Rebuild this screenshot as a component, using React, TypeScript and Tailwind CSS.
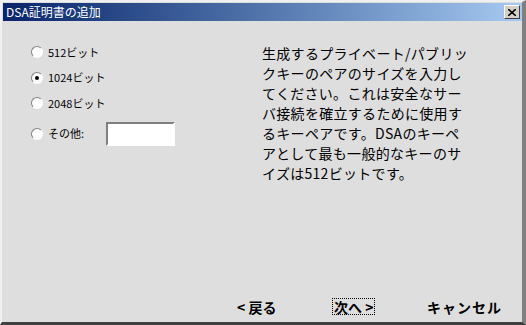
import React from 'react'

const jp = { fontFamily: '"Noto Sans CJK JP", "DejaVu Sans", sans-serif' }

const lines = [
  '生成するプライベート/パブリッ',
  'クキーのペアのサイズを入力し',
  'てください。これは安全なサー',
  'バ接続を確立するために使用す',
  'るキーペアです。DSAのキーペ',
  'アとして最も一般的なキーのサ',
  'イズは512ビットです。',
]

function Radio({ checked }: { checked?: boolean }) {
  return (
    <span className="relative inline-block h-[12px] w-[12px] rounded-full border border-t-[#808080] border-l-[#808080] border-b-white border-r-white bg-white">
      {checked && <span className="absolute left-[3px] top-[3px] h-[4px] w-[4px] rounded-full bg-black" />}
    </span>
  )
}

function Option({ label, checked }: { label: string; checked?: boolean }) {
  return (
    <div className="flex h-[14px] items-center gap-[5px]">
      <Radio checked={checked} />
      <span className="text-[11px] leading-none text-black">{label}</span>
    </div>
  )
}

export default function App() {
  return (
    <div className="h-[325px] w-[526px] overflow-hidden bg-[#dedede]" style={jp}>
      <div className="flex h-[325px] flex-col border-l-2 border-t-2 border-r-4 border-b-[3px] border-l-[#f0f0f0] border-t-[#f0f0f0] border-r-[#808080] border-b-[#404040] pl-px pt-px">
        <div className="flex h-[18px] items-center justify-between bg-gradient-to-r from-[#0a246a] to-[#a6caf0] pl-[3px] pr-[2px]">
          <span className="text-[12px] leading-none text-white">DSA証明書の追加</span>
          <button className="flex h-[14px] w-[16px] items-center justify-center border border-t-white border-l-white border-r-[#404040] border-b-[#404040] bg-[#d4d0c8]">
            <svg width="8" height="7" viewBox="0 0 8 7">
              <path d="M0 0 L8 7 M8 0 L0 7" stroke="black" strokeWidth="1.6" />
            </svg>
          </button>
        </div>
        <div className="flex flex-1 flex-col">
          <div className="flex flex-1 pt-[21px]">
            <div className="flex w-[232px] flex-col gap-[11.5px] pl-[28px] pt-[3px]">
              <Option label="512ビット" />
              <Option label="1024ビット" checked />
              <Option label="2048ビット" />
              <div className="flex items-center">
                <Option label="その他:" />
                <input className="ml-[22px] h-[24px] w-[69px] border-2 border-t-[#808080] border-l-[#808080] border-b-white border-r-white bg-white outline-none" />
              </div>
            </div>
            <div className="flex flex-col pl-[27px] pt-[1px] text-[14px] leading-[20px] tracking-[0.3px] text-black">
              {lines.map((l) => (
                <span key={l} className="whitespace-nowrap">{l}</span>
              ))}
            </div>
          </div>
          <div className="flex h-[24px] items-start pl-[234px] text-[14px] font-bold leading-none text-black">
            <span className="w-[95px] pt-[2px]">&lt; 戻る</span>
            <span className="w-[95px]">
              <span className="inline-block border border-dotted border-black px-px pt-px">次へ &gt;</span>
            </span>
            <span className="pt-[2px] tracking-[1px]">キャンセル</span>
          </div>
        </div>
      </div>
    </div>
  )
}
